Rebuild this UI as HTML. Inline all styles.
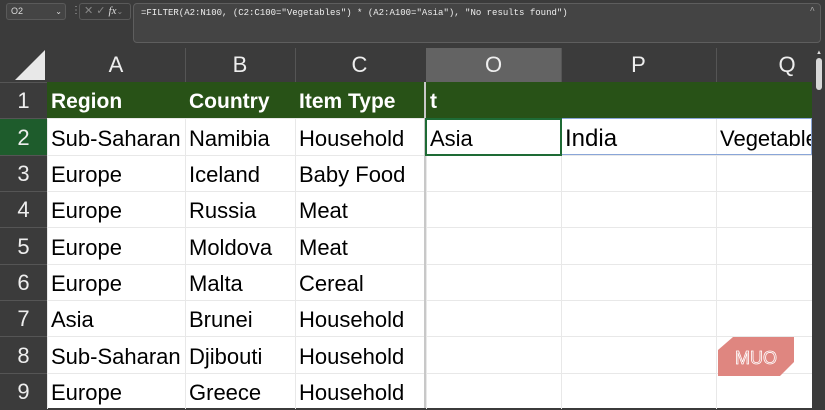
<!DOCTYPE html>
<html><head><style>
*{margin:0;padding:0;box-sizing:border-box}
body{width:825px;height:408px;overflow:hidden;background:#3b3b3b;font-family:"Liberation Sans",sans-serif;position:relative}
.a{position:absolute}
.cell{position:absolute;overflow:hidden;white-space:nowrap;font-size:22px;color:#000;padding-left:4px;padding-top:2px}
.hd{position:absolute;color:#eee;font-size:22px;text-align:center;line-height:34px}
</style></head><body>
<div class="a" style="left:6px;top:3px;width:60px;height:17px;border:1px solid #5a5a5a;border-radius:3px;background:#444;color:#ddd;font-size:9px;line-height:15px;padding-left:4px">O2<span style="position:absolute;right:3px;font-size:8px">⌄</span></div>
<div class="a" style="left:71px;top:5px;color:#aaa;font-size:10px">⋮</div>
<div class="a" style="left:79px;top:3px;width:52px;height:17px;border:1px solid #5a5a5a;border-radius:3px;color:#888;font-size:11px;line-height:15px;padding-left:4px">✕ ✓ <i style="color:#ddd;font-family:'Liberation Serif'">fx</i><span style="font-size:8px">⌄</span></div>
<div class="a" style="left:133px;top:3px;width:688px;height:40px;border:1px solid #5e5e5e;border-radius:4px;background:#444;color:#eee;font-family:'Liberation Mono',monospace;font-size:9px;padding:4px 7px">=FILTER(A2:N100, (C2:C100="Vegetables") * (A2:A100="Asia"), "No results found")<span style="position:absolute;right:5px;top:2px;color:#aaa;font-size:9px">^</span></div>
<div class="a" style="left:0;top:48px;width:47px;height:34px;background:#3b3b3b"></div>
<svg class="a" style="left:14px;top:50px" width="32" height="30"><polygon points="31,0 31,30 1,30" fill="#e8e8e8"/></svg>
<div class="a" style="left:426px;top:48px;width:135px;height:34px;background:#636363"></div>
<div class="hd" style="left:47px;top:48px;width:138px">A</div>
<div class="hd" style="left:185px;top:48px;width:110px">B</div>
<div class="hd" style="left:295px;top:48px;width:129px">C</div>
<div class="hd" style="left:426px;top:48px;width:135px">O</div>
<div class="hd" style="left:561px;top:48px;width:155px">P</div>
<div class="hd" style="left:716px;top:48px;width:142px">Q</div>
<div class="a" style="left:185px;top:48px;width:1px;height:34px;background:#555"></div>
<div class="a" style="left:295px;top:48px;width:1px;height:34px;background:#555"></div>
<div class="a" style="left:561px;top:48px;width:1px;height:34px;background:#555"></div>
<div class="a" style="left:716px;top:48px;width:1px;height:34px;background:#555"></div>
<div class="a" style="left:47px;top:82px;width:765px;height:326px;background:#fff"></div>
<div class="a" style="left:47px;top:82px;width:765px;height:36px;background:#285217"></div>
<div id="g"></div>
<div class="a" style="left:812px;top:48px;width:13px;height:360px;background:#3b3b3b"></div>
<div class="a" style="left:816px;top:50px;font-size:6px;color:#ddd">▲</div>
<div class="a" style="left:816px;top:58px;width:6px;height:32px;border-radius:3px;background:#d8d8d8"></div>
<svg class="a" style="left:717px;top:336px" width="78" height="42"><polygon points="16,1 77,1 77,26 63,40 1,40 1,14" fill="#df8680"/><text x="39" y="28" text-anchor="middle" font-family="Liberation Sans" font-size="18" fill="none" stroke="#fff" stroke-width="0.8">MUO</text></svg>
<script>
var tops=[82,118,155,191,227,264,300,336,373,409];
var cols=[[47,138],[185,110],[295,129],[426,135],[561,155],[716,96]];
var data=[["Region","Country","Item Type","t","",""],["Sub-Saharan","Namibia","Household","Asia","India","Vegetables"],["Europe","Iceland","Baby Food"],["Europe","Russia","Meat"],["Europe","Moldova","Meat"],["Europe","Malta","Cereal"],["Asia","Brunei","Household"],["Sub-Saharan","Djibouti","Household"],["Europe","Greece","Household"]];
var h="";
for(var r=0;r<9;r++){var t=tops[r],ht=tops[r+1]-t;
h+='<div class="a" style="left:0;top:'+t+'px;width:47px;height:'+ht+'px;background:'+(r==1?'#1e5c2c':'#3b3b3b')+';color:#eee;font-size:22px;text-align:center;line-height:'+ht+'px;border-top:1px solid #555">'+(r+1)+'</div>';
if(r>0)h+='<div class="a" style="left:47px;top:'+t+'px;width:765px;height:1px;background:#e8e8e8"></div>';
for(var c=0;c<6;c++){var v=(data[r][c]||"");var col=cols[c];
if(r>0)h+='<div class="a" style="left:'+col[0]+'px;top:'+t+'px;width:1px;height:'+ht+'px;background:#e8e8e8"></div>';
if(v)h+='<div class="cell" style="left:'+col[0]+'px;top:'+t+'px;width:'+col[1]+'px;height:'+ht+'px;line-height:'+ht+'px;'+(r==0?'color:#fff;font-weight:bold;font-size:21px':'')+(r==1&&c==4?';font-size:24px':'')+'">'+v+'</div>';}}
h+='<div class="a" style="left:424px;top:82px;width:2px;height:326px;background:#c8c8c8"></div>';
h+='<div class="a" style="left:426px;top:118px;width:386px;height:37px;border:1px solid #8aa6d8;border-left:none"></div>';
h+='<div class="a" style="left:425px;top:118px;width:137px;height:38px;border:2px solid #1e6b35"></div>';
document.getElementById("g").innerHTML=h;
</script>
</body></html>
